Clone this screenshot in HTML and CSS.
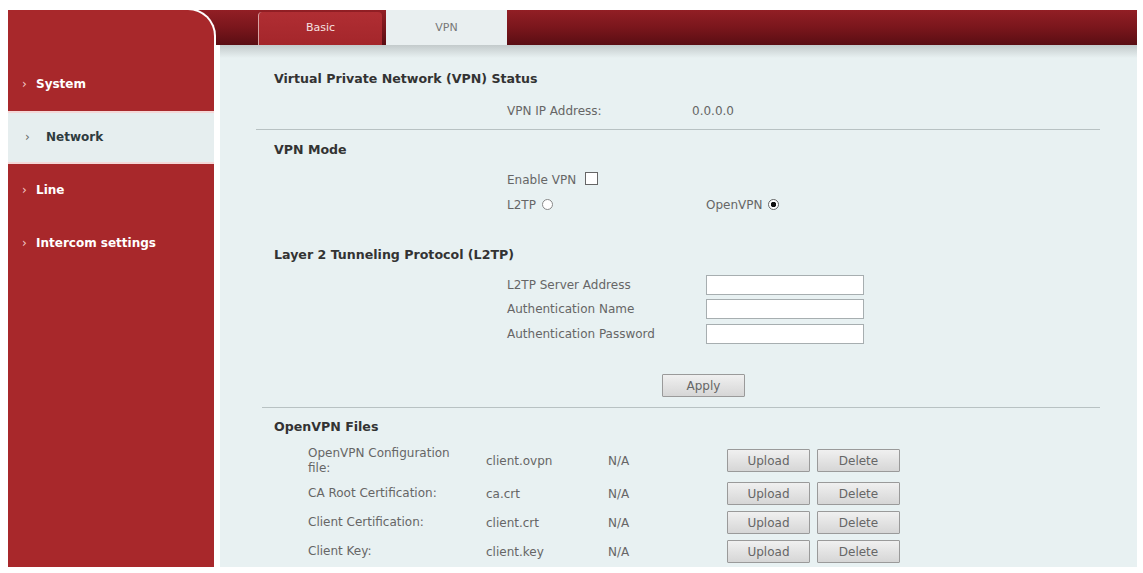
FILE: index.html
```html
<!DOCTYPE html>
<html dir="ltr" lang="en">
<head>
	<title>VPN</title>
	<meta http-equiv="content-type" content="text/html; charset=utf-8" />
	<link rel="stylesheet" href="styles.css">
</head>
<body>
	<div class="page">
		<div class="side">
			<ul class="menu">
				<li><span class="arr">&rsaquo;</span>System</li>
				<li class="cur"><span class="arr">&rsaquo;</span>Network</li>
				<li><span class="arr">&rsaquo;</span>Line</li>
				<li><span class="arr">&rsaquo;</span>Intercom settings</li>
			</ul>
		</div>
		<div class="main">
			<div class="bar">
				<a class="tab">Basic</a>
				<a class="tab on">VPN</a>
			</div>
			<div class="content">
				<div class="box">
					<div class="title first">Virtual Private Network (VPN) Status</div>
					<div class="row r-ip"><span class="lab ip">VPN IP Address:</span><span>0.0.0.0</span></div>
					<div class="rule r1"></div>

					<div class="title t-mode">VPN Mode</div>
					<div class="row r-en"><span>Enable VPN</span><span class="chk"></span></div>
					<div class="row r-mode">
						<span class="lab wide">L2TP <span class="rad"></span></span>
						<span>OpenVPN <span class="rad on"></span></span>
					</div>

					<div class="title t-l2tp">Layer 2 Tunneling Protocol (L2TP)</div>
					<div class="row r-srv"><span class="lab wide">L2TP Server Address</span><span class="inp"></span></div>
					<div class="row"><span class="lab wide">Authentication Name</span><span class="inp"></span></div>
					<div class="row r-pwd"><span class="lab wide">Authentication Password</span><span class="inp"></span></div>

					<div class="apply"><button class="btn">Apply</button></div>
					<div class="rule r2"></div>

					<div class="title t-files">OpenVPN Files</div>
					<div class="frow tall">
						<span class="fname"><span class="wrap">OpenVPN Configuration file:</span></span>
						<span class="ffile">client.ovpn</span><span class="fstat">N/A</span>
						<button class="btn">Upload</button><button class="btn">Delete</button>
					</div>
					<div class="frow r-ca">
						<span class="fname">CA Root Certification:</span>
						<span class="ffile">ca.crt</span><span class="fstat">N/A</span>
						<button class="btn">Upload</button><button class="btn">Delete</button>
					</div>
					<div class="frow">
						<span class="fname">Client Certification:</span>
						<span class="ffile">client.crt</span><span class="fstat">N/A</span>
						<button class="btn">Upload</button><button class="btn">Delete</button>
					</div>
					<div class="frow">
						<span class="fname">Client Key:</span>
						<span class="ffile">client.key</span><span class="fstat">N/A</span>
						<button class="btn">Upload</button><button class="btn">Delete</button>
					</div>
				</div>
			</div>
		</div>
	</div>
</body>
</html>
```

FILE: styles.css
```css
html, body { margin: 0; padding: 0; background: #fff; }
body { font-family: "DejaVu Sans", Verdana, sans-serif; font-size: 12px; color: #666; }

.page { display: flex; height: 573px; box-sizing: border-box; padding: 10px 6px 6px 8px; }

/* left menu */
.side { width: 206px; flex: none; background: #a8282b; border-top-right-radius: 26px; box-shadow: 0 0 0 2px #fff; z-index: 1; }
.menu { list-style: none; margin: 0; padding: 48px 0 0 0; }
.menu li { height: 53px; line-height: 53px; box-sizing: border-box; color: #fff; font-weight: bold; padding-left: 14px; }
.menu .arr { display: inline-block; width: 14px; font-weight: normal; color: #f3c9c9; }
.menu li.cur { background: #e6eeef; color: #2f3b40; padding-left: 17px; border-top: 2px solid #f4d8d8; border-bottom: 2px solid #f4d8d8; line-height: 49px; }
.menu li.cur .arr { width: 21px; color: #666; }

/* right side */
.main { flex: 1; display: flex; flex-direction: column; margin-left: -24px; }
.bar { height: 35px; flex: none; display: flex; align-items: flex-end; padding-left: 68px; background: linear-gradient(#921f25, #7a161c 50%, #5a0d13); }
.tab { display: block; width: 124px; height: 33px; line-height: 32px; text-align: center; font-size: 11px; color: #f5e0e0; background: linear-gradient(#b02e33, #a4262b); border-radius: 4px 4px 0 0; border-left: 1px solid #d9a3a3; box-sizing: border-box; }
.tab.on { width: 121px; height: 35px; margin-left: 4px; line-height: 36px; color: #777; background: #e9eff0; border: none; border-radius: 0; }

.content { flex: 1; margin-left: 30px; background: linear-gradient(#c3cacb, #e8f1f2 13px); }
.box { width: 844px; margin-left: 36px; padding-top: 24px; }

.title { height: 20px; line-height: 20px; padding-left: 18px; font-weight: bold; font-size: 12.6px; color: #333; }
.t-mode { margin-top: 10px; }
.t-l2tp { margin-top: 28px; }
.t-files { margin-top: 9px; }

.row { display: flex; align-items: center; height: 24px; padding-left: 251px; }
.r-ip { margin-top: 10px; }
.r-en { margin-top: 8px; }
.r-mode { margin-top: 1px; }
.r-srv { margin-top: 8px; }
.r-pwd { margin-top: 1px; }
.lab.ip { width: 185px; }
.lab.wide { width: 199px; }

.rule { height: 1px; background: #b8c2c3; }
.r1 { margin-top: 6px; }
.r2 { margin-top: 10px; margin-left: 6px; }

.chk { display: inline-block; width: 11px; height: 11px; border: 1px solid #666; background: #fff; margin-left: 9px; margin-top: -3px; }
.rad { display: inline-block; width: 11px; height: 11px; border: 1px solid #888; border-radius: 50%; background: #fff; margin-left: 2px; vertical-align: -1px; box-sizing: border-box; }
.rad.on { border-color: #666; background: radial-gradient(circle, #111 0 2.5px, #fff 3px); }

.inp { display: block; width: 158px; height: 20px; box-sizing: border-box; background: #fff; border: 1px solid #a7aeb0; }

.btn { width: 83px; height: 23px; padding: 0; font-family: "DejaVu Sans", Verdana, sans-serif; font-size: 12px; color: #666; background: linear-gradient(#f0f0f0, #d6d6d6); border: 1px solid #9a9a9a; border-radius: 1px; }
.apply { margin-top: 28px; padding-left: 406px; height: 23px; }
.apply .btn { display: block; }

.frow { display: flex; align-items: center; height: 23px; margin-top: 6px; padding-left: 52px; }
.frow.tall { height: 33px; margin-top: 7px; }
.frow.r-ca { margin-top: 5px; }
.fname { width: 178px; line-height: 15px; }
.wrap { display: block; width: 150px; }
.ffile { width: 122px; }
.fstat { width: 119px; }
.frow .btn + .btn { margin-left: 7px; }
```
